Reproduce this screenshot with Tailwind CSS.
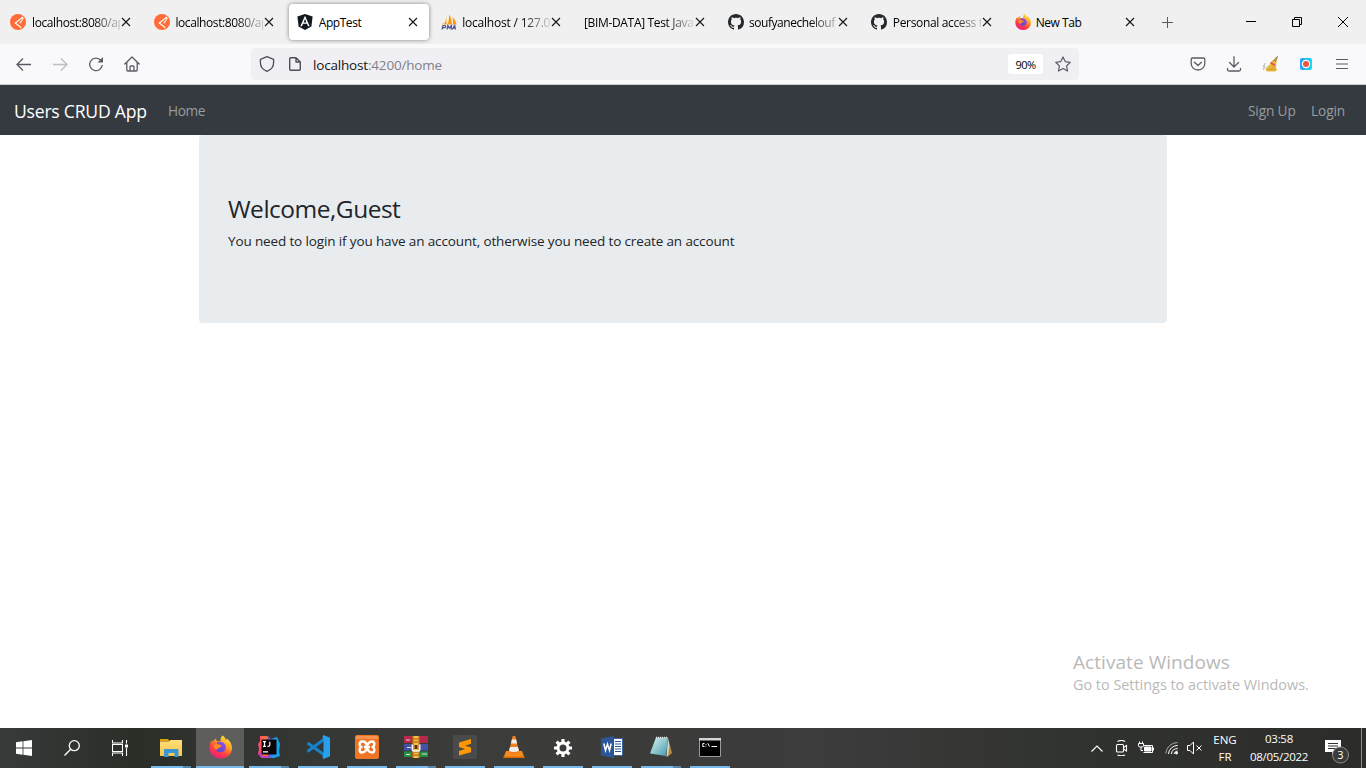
<!DOCTYPE html>
<html lang="en">
<head>
<meta charset="utf-8">
<title>AppTest</title>
<script src="https://cdn.jsdelivr.net/npm/@tailwindcss/browser@4"></script>
</head>
<body class="w-[1366px] h-[768px] overflow-hidden bg-white flex flex-col font-['Open_Sans','Noto_Sans',sans-serif]">
<svg class="absolute w-0 h-0">
  <defs>
    <linearGradient id="ffo" x1=".8" y1="0" x2=".2" y2="1"><stop offset="0" stop-color="#fff04a"/><stop offset=".35" stop-color="#ffa31f"/><stop offset=".65" stop-color="#ff4040"/><stop offset="1" stop-color="#e8178a"/></linearGradient>
    <linearGradient id="ffp" x1="1" y1="0" x2="0" y2="1"><stop offset="0" stop-color="#a04ef0"/><stop offset="1" stop-color="#4a48c8"/></linearGradient>
    <linearGradient id="dark" x1="0" y1="0" x2="1" y2="0"><stop offset="0" stop-color="#ff3d7f"/><stop offset=".35" stop-color="#f97a2b"/><stop offset=".5" stop-color="#7a50c8"/><stop offset=".7" stop-color="#14a4ee"/></linearGradient>
    <linearGradient id="note" x1="0" y1="0" x2="1" y2="1"><stop offset="0" stop-color="#dff3f5"/><stop offset="1" stop-color="#3f9aa8"/></linearGradient>
    <linearGradient id="fold" x1="0" y1="0" x2="0" y2="1"><stop offset="0" stop-color="#ffdf79"/><stop offset="1" stop-color="#f7c648"/></linearGradient>
    <linearGradient id="rec" x1="0" y1="0" x2="1" y2="0"><stop offset="0" stop-color="#2a9df4"/><stop offset="1" stop-color="#12dcf5"/></linearGradient>
    <symbol id="x" viewBox="0 0 10 10"><path d="M1 1l8 8M9 1l-8 8" stroke="#15141a" stroke-width="1.1" fill="none"/></symbol>
    <symbol id="postman" viewBox="0 0 16 16"><circle cx="8" cy="8" r="8" fill="#ff6c37"/><path d="M13 3L5.300 9l6 4.800M9.700 9.300l2.600-3.300" stroke="#fff" stroke-width="1.100" fill="none"/><circle cx="12.600" cy="4.600" r="1" fill="#fff"/></symbol>
    <symbol id="gh" viewBox="0 0 16 16"><path fill="#24292f" fill-rule="evenodd" d="M8 0C3.58 0 0 3.58 0 8c0 3.54 2.29 6.53 5.47 7.59.4.07.55-.17.55-.38 0-.19-.01-.82-.01-1.49-2.01.37-2.53-.49-2.69-.94-.09-.23-.48-.94-.82-1.13-.28-.15-.68-.52-.01-.53.63-.01 1.08.58 1.23.82.72 1.21 1.87.87 2.33.66.07-.52.28-.87.51-1.07-1.78-.2-3.64-.89-3.64-3.95 0-.87.31-1.59.82-2.15-.08-.2-.36-1.02.08-2.12 0 0 .67-.21 2.2.82.64-.18 1.32-.27 2-.27s1.36.09 2 .27c1.53-1.04 2.2-.82 2.2-.82.44 1.1.16 1.92.08 2.12.51.56.82 1.27.82 2.15 0 3.07-1.87 3.75-3.65 3.95.29.25.54.73.54 1.48 0 1.07-.01 1.93-.01 2.2 0 .21.15.46.55.38A8.01 8.01 0 0 0 16 8c0-4.42-3.58-8-8-8z"/></symbol>
    <symbol id="ff" viewBox="0 0 24 24"><path fill="url(#ffo)" d="M14.2 0c2 1.300 3 3 3.300 4.800.8-.2.9-1 .8-1.900 2.800 2.300 5.700 5.700 5.700 10.100C24 19.200 18.800 24 12.200 24 5.200 24 .5 19 .5 12.800c0-3.300 1.200-6 2.700-8 .1.900.3 1.500.7 2 .7-1.700 2-3 3.500-3.800-.1 1.200.2 2.200.9 2.900 1.300-.1 2.600 0 3.600.6C11.900 4.200 12.300 1.600 14.200 0z"/><path fill="url(#ffp)" d="M8 7.200c1.700-1 4.600-1.200 6.800.2 2.300 1.400 3.200 3.800 2.700 6-.6 2.800-2.900 4.300-5.500 4.200-2.900-.1-5.100-2-5.500-4.500 1.400.9 3 .8 4.200-.3.700-.6 1.400-.9 2.300-1-.8-1.400-2.500-1.900-4-1.600z"/><path fill="#ff8a1f" d="M4.500 10.500c1.200-1.200 3.200-1.800 5.200-1.300 1.600.1 3.200 1 3.400 1.900-.2.700-1.700.7-2.500 1.500-.7.700-1 1.600-2.200 1.900-1.500.3-3.300-.7-3.900-4z"/></symbol>
  </defs>
</svg>

<!-- Tab strip -->
<div class="h-11 shrink-0 bg-[#f0f0f0] flex text-[12px] leading-4 text-black whitespace-nowrap">
  <div class="w-[143.400px] flex items-center pl-[10px]"><svg class="w-4 h-4 shrink-0"><use href="#postman"/></svg><div class="ml-1.5 pt-0.5 w-[88px] overflow-hidden shrink-0 [mask-image:linear-gradient(to_right,black_60px,transparent_94px)]"><span class="tracking-[-0.4px]">localhost:8080/ap</span></div><svg class="w-2.5 h-2.5 shrink-0 ml-px"><use href="#x"/></svg></div>
  <div class="w-[143.400px] flex items-center pl-[10.600px]"><svg class="w-4 h-4 shrink-0"><use href="#postman"/></svg><div class="ml-[5.400px] pt-0.5 w-[88px] overflow-hidden shrink-0 [mask-image:linear-gradient(to_right,black_60px,transparent_94px)]"><span class="tracking-[-0.4px]">localhost:8080/ap</span></div><svg class="w-2.5 h-2.5 shrink-0 ml-px"><use href="#x"/></svg></div>
  <div class="w-[143.400px] pl-[2px] pr-[1px] py-1 flex"><div class="flex-1 bg-white rounded shadow-[0_0_4px_rgba(0,0,0,0.45)] flex items-center pl-2"><svg class="w-4 h-4 shrink-0" viewBox="0 0 16 16"><path fill="#111820" d="M8 0l7.600 2.600-1.200 10L8 16l-6.400-3.400L.4 2.600z"/><path fill="#fff" fill-rule="evenodd" d="M8 1.800L3.300 12.200H5l1-2.400h4l1 2.400h1.700zM8 5l1.400 3.400H6.600z"/></svg><div class="ml-1.5 pt-0.5 w-[88px] overflow-hidden shrink-0"><span class="tracking-[-0.45px]">AppTest</span></div><svg class="w-2.5 h-2.5 shrink-0 ml-px"><use href="#x"/></svg></div></div>
  <div class="w-[143.400px] flex items-center pl-[11px]"><svg class="w-4 h-4 shrink-0" viewBox="0 0 16 16"><path fill="#f89c0e" d="M5.500 2v8.500H2.800C4.600 8 5.300 5 5.500 2zM8 .5c2.300 3 3 6 2.800 10H6.300C7.800 7.500 8.200 4 8 .5zM11.500 3c2 2 3.700 4.500 4 7.500h-3.700c.3-3 .2-5-.3-7.500zM2.800 6C2.800 8 2 9.500.8 10.500h1.500z"/><path d="M1 15.500l1-4h1.700c1.500 0 1.200 2.200-.5 2.200H1.500M6 15.500l.9-4 1.300 2.500 2.300-2.500-.6 4M11 15.500l2.700-4 .8 4M12 14.200h2.500" fill="none" stroke="#4c4f8c" stroke-width="1.200"/></svg><div class="ml-[5px] pt-0.5 w-[88px] overflow-hidden shrink-0 [mask-image:linear-gradient(to_right,black_60px,transparent_92px)]"><span class="tracking-[-0.2px]">localhost / 127.0.</span></div><svg class="w-2.5 h-2.5 shrink-0 ml-px"><use href="#x"/></svg></div>
  <div class="w-[143.400px] flex items-center pl-[10.400px]"><div class="w-[110px] pt-0.5 overflow-hidden shrink-0 [mask-image:linear-gradient(to_right,black_82px,transparent_113px)]"><span class="tracking-[-0.33px]">[BIM-DATA] Test Java</span></div><svg class="w-2.5 h-2.5 shrink-0 ml-px"><use href="#x"/></svg></div>
  <div class="w-[143.400px] flex items-center pl-[11px]"><svg class="w-4 h-4 shrink-0"><use href="#gh"/></svg><div class="ml-[5px] pt-0.5 w-[88px] overflow-hidden shrink-0 [mask-image:linear-gradient(to_right,black_60px,transparent_96px)]"><span class="tracking-[-0.45px]">soufyanechelouf</span></div><svg class="w-2.5 h-2.5 shrink-0 ml-px"><use href="#x"/></svg></div>
  <div class="w-[143.400px] flex items-center pl-[11px]"><svg class="w-4 h-4 shrink-0"><use href="#gh"/></svg><div class="ml-[5.500px] pt-0.5 w-[88px] overflow-hidden shrink-0 [mask-image:linear-gradient(to_right,black_60px,transparent_94px)]"><span class="tracking-[-0.35px]">Personal access t</span></div><svg class="w-2.5 h-2.5 shrink-0 ml-px"><use href="#x"/></svg></div>
  <div class="w-[143.400px] flex items-center pl-[11px]"><svg class="w-4 h-4 shrink-0"><use href="#ff"/></svg><div class="ml-[5px] pt-0.5 w-[88px] overflow-hidden shrink-0"><span class="tracking-[-0.45px]">New Tab</span></div><svg class="w-2.5 h-2.5 shrink-0 ml-px"><use href="#x"/></svg></div>
  <div class="flex-1 flex items-center justify-between pl-[14.800px] pr-[18px]">
    <svg class="w-[11px] h-[11px]" viewBox="0 0 11 11"><path d="M5.500 0v11M0 5.500h11" stroke="#5b5b66"/></svg>
    <div class="flex items-center gap-9">
      <svg class="w-[10px] h-[10px]" viewBox="0 0 10 10"><path d="M0 4.500h10" stroke="#000"/></svg>
      <svg class="w-[10px] h-[10px]" viewBox="0 0 10 10"><path d="M.5 2.500h7v7h-7zM2.500 2.500v-2h7v7h-2" stroke="#000" fill="none"/></svg>
      <svg class="w-[10px] h-[10px]" viewBox="0 0 10 10"><path d="M0 0l10 10M10 0L0 10" stroke="#000"/></svg>
    </div>
  </div>
</div>

<!-- Address toolbar -->
<div class="h-[41px] shrink-0 bg-[#f9f9fb] border-b border-[#cccccc] flex items-center pl-4 pr-4">
  <div class="flex items-center gap-5 w-[235px]">
    <svg class="w-4 h-4" viewBox="0 0 16 16" fill="none" stroke="#5b5b66" stroke-width="1.300"><path d="M15 8.500H1.500M7 2.500l-6 6 6 6"/></svg>
    <svg class="w-4 h-4" viewBox="0 0 16 16" fill="none" stroke="#bdbdc3" stroke-width="1.300"><path d="M1 8.500h13.500M9 2.500l6 6-6 6"/></svg>
    <svg class="w-4 h-4" viewBox="0 0 16 16" fill="none" stroke="#5b5b66" stroke-width="1.300"><path d="M14.300 9A6.300 6.300 0 1 1 13 4.500"/><path d="M15 1v5.500H9.500z" fill="#5b5b66" stroke="none"/></svg>
    <svg class="w-4 h-4" viewBox="0 0 16 16" fill="none" stroke="#5b5b66" stroke-width="1.300" stroke-linejoin="round" stroke-linecap="round"><path d="M.8 8L8 1l7.200 7M2.800 6.500V14q0 1 1 1h8.400q1 0 1-1V6.500M6 15v-4q0-1 1-1h2q1 0 1 1v4"/></svg>
  </div>
  <div class="w-[828px] h-8 bg-[#f0f0f4] rounded flex items-center pl-2 pr-2">
    <svg class="w-4 h-4" viewBox="0 0 16 16" fill="none" stroke="#4d4d57" stroke-width="1.300" stroke-linejoin="round"><path d="M8 .7l6.600 2.600v3.200c0 4-2.500 7.300-6.600 8.800C3.900 13.800 1.400 10.500 1.400 6.500V3.300z"/></svg>
    <svg class="w-4 h-4 ml-3" viewBox="0 0 16 16" fill="none" stroke="#4d4d57" stroke-width="1.400" stroke-linejoin="round"><path d="M9 1.700H3.700q-1 0-1 1v10.600q0 1 1 1h8.600q1 0 1-1V6zM9 1.700V6h4.300"/></svg>
    <div class="ml-[10px] pt-0.5 flex-1 text-[13.500px] leading-5 text-[#15141a] whitespace-nowrap"><span class="tracking-[-0.18px]">localhost<span class="text-[#80808a]">:4200/home</span></span></div>
    <div class="w-[35px] h-5 bg-white rounded-[3px] text-[11px] leading-[22px] text-center text-black tracking-[-0.5px] mr-3">90%</div>
    <svg class="w-4 h-4" viewBox="0 0 16 16" fill="none" stroke="#5b5b66" stroke-width="1.200" stroke-linejoin="round"><path d="M8 .9l2.200 4.700 5.100.7-3.700 3.600.9 5.200L8 12.600l-4.500 2.500.9-5.200L.7 6.300l5.100-.7z"/></svg>
  </div>
  <div class="flex-1 flex items-center justify-end gap-5">
    <svg class="w-4 h-4" viewBox="0 0 16 16" fill="none" stroke="#5b5b66" stroke-width="1.300" stroke-linejoin="round" stroke-linecap="round"><path d="M2.500 2h11q1.300 0 1.300 1.300V7.500a6.800 6.500 0 0 1-13.600 0V3.300Q1.200 2 2.500 2zM4.500 6.200L8 9.500l3.500-3.300"/></svg>
    <svg class="w-4 h-4" viewBox="0 0 16 16" fill="none" stroke="#5b5b66" stroke-width="1.300" stroke-linejoin="round" stroke-linecap="round"><path d="M8 .7v10M3.500 6.500L8 11l4.500-4.500M1.500 12.500v1q0 1.500 1.500 1.500h10q1.500 0 1.500-1.500v-1"/></svg>
    <svg class="w-4 h-4" viewBox="0 0 16 16"><path d="M15.500.3L11 5l2.500 1.500z" stroke="#a8742c" stroke-width=".8" fill="#c9973e"/><path fill="#e8b93c" d="M10.500 4l4 2.500c-.6 3-.6 5 .4 8l-2 1H5C3.500 14.500 3 13 4.500 11.500 7 9.500 9 7.500 10.500 4z"/><path d="M8.500 6.500l4.500 3" stroke="#e0564a" stroke-width="1.800"/><path d="M5.500 13.500h8M9.500 11l3.500 1" stroke="#c99628" stroke-width=".8"/><path d="M3.500 7L1 11M3.200 10L1 14" stroke="#b8c4c0" stroke-width="1.200"/></svg>
    <svg class="w-4 h-4" viewBox="0 0 16 16"><rect x="2" y="2" width="12" height="12" rx="2" fill="url(#rec)"/><circle cx="8" cy="8" r="4.200" fill="#fff"/><circle cx="8" cy="8" r="3" fill="#f0503c"/></svg>
    <svg class="w-4 h-4" viewBox="0 0 16 16" stroke="#5b5b66" stroke-width="1.200"><path d="M2 3.500h12M2 8h12M2 12.500h12"/></svg>
  </div>
</div>

<!-- Web page -->
<main class="flex-1 flex flex-col bg-white">
  <nav class="h-[50px] bg-[#343a40] flex items-center pt-0.5 pl-[14px] pr-[21px] text-[13.700px] text-[#999c9f] whitespace-nowrap">
    <a class="text-[17.600px] text-white w-[154px] tracking-[-0.23px]">Users CRUD App</a>
    <a class="flex-1 tracking-[-0.4px]">Home</a>
    <a class="w-[63px] tracking-[-0.150px]">Sign Up</a>
    <a class="w-[34px] tracking-[-0.1px]">Login</a>
  </nav>
  <section class="w-[968px] h-[188px] mx-auto bg-[#e9ecef] rounded-[4px] pl-[29px] pt-[57px] text-[#212529] whitespace-nowrap">
    <h3 class="text-[24.500px] leading-[34px] tracking-[-0.5px]">Welcome,Guest</h3>
    <p class="text-[13.500px] leading-[22px] mt-[4px] tracking-[-0.135px]">You need to login if you have an account, otherwise you need to create an account</p>
  </section>
  <div class="flex-1 flex flex-col justify-end items-start pl-[1073px] pb-[32px] text-[#b9b9b9] whitespace-nowrap">
    <div class="text-[19px] leading-6 tracking-[0.06px]">Activate Windows</div>
    <div class="text-[14.400px] leading-[22px]">Go to Settings to activate Windows.</div>
  </div>
</main>

<!-- Taskbar -->
<footer class="h-10 shrink-0 bg-[linear-gradient(90deg,#373a39_0%,#2a2e27_10%,#30332f_15%,#3c3d3a_35%,#3b3c3b_60%,#30322f_80%,#2c2d2b_100%)] flex text-white">
  <div class="w-12 flex items-center justify-center"><svg class="w-4 h-4" viewBox="0 0 16 16" fill="#fff"><path d="M0 2.300L6.600 1.300v6.300H0zM7.400 1.200L16 0v7.600H7.400zM0 8.400h6.600v6.300L0 13.700zM7.400 8.400H16V16l-8.600-1.200z"/></svg></div>
  <div class="w-12 flex items-center justify-center"><svg class="w-4 h-4" viewBox="0 0 16 16" fill="none" stroke="#fff" stroke-width="1.300"><circle cx="10.300" cy="5.700" r="5"/><path d="M6.700 9.300L.5 15.500"/></svg></div>
  <div class="w-12 flex items-center justify-center"><svg class="w-4 h-4" viewBox="0 0 16 16" fill="none" stroke="#fff" stroke-width="1.100"><path d="M.5 0v3h10V0M.5 4.500h10v7H.5zM.5 16v-3h10v3M14.500 0v3.500M14.500 8v8"/><path fill="#fff" stroke="none" d="M13 4.500h3v3h-3z"/></svg></div>
  <div class="ml-[7px] mr-[5px] w-10 flex flex-col"><div class="flex-1 flex items-center justify-center"><svg class="w-[22px] h-5 mt-0.5" viewBox="0 0 22 20"><path fill="#e0a20c" d="M0 1h8l2 2.500H0z"/><path fill="url(#fold)" d="M0 3.500h9l1.500-1.500H22v16H0z"/><path fill="#3d95d6" d="M4 19v-7q0-1 1-1h12.500q1 0 1 1v7h-4v-4H8.500v4z"/></svg></div><div class="flex h-0.5"><div class="w-8 bg-[#76b9ed]"></div><div class="w-2 bg-[#5788ac]"></div></div></div>
  <div class="w-12 bg-[#5d5e5c] flex flex-col"><div class="flex-1 flex items-center justify-center"><svg class="w-[23px] h-[24px]"><use href="#ff"/></svg></div><div class="h-0.5 bg-[#76b9ed]"></div></div>
  <div class="w-[49px] pl-[5px] flex flex-col"><div class="w-10 flex-1 flex items-center justify-center"><svg class="w-6 h-6" viewBox="0 0 24 24"><path fill="url(#dark)" d="M3 1l8 0 3 3 6-2 3 7-1 8 1 4-6 2-5 0-7 0-4-4 1-5-1-5 2-3z"/><path d="M2 17l3 5 5 0" stroke="#c23cc8" stroke-width="2" fill="none"/><path fill="#0c0508" d="M4.500 4.500h15v15h-15z"/><path d="M6 6.700h3M7.500 6.700v4.600M6 11.300h3M12.800 6.700v3.400q0 1.200-1.200 1.200h-1.100M6 16.800h5" stroke="#fff" stroke-width="1.200" fill="none"/></svg></div><div class="flex h-0.5 w-10"><div class="w-8 bg-[#76b9ed]"></div><div class="w-2 bg-[#5788ac]"></div></div></div>
  <div class="w-[49px] pl-[5px] flex flex-col"><div class="w-10 flex-1 flex items-center justify-center"><svg class="w-6 h-6" viewBox="0 0 24 24"><path d="M1.500 8l17 12M1.500 16.500L18.500 4" stroke="#1583cc" stroke-width="3"/><path fill="#27a0ee" d="M17.500 0L24 2.800v18.400L17.500 24l-1-1.500 1-4.500V6l-1-4.500z"/></svg></div><div class="h-0.5 w-10 bg-[#76b9ed]"></div></div>
  <div class="w-[49px] pl-[5px] flex flex-col"><div class="w-10 flex-1 flex items-center justify-center"><svg class="w-6 h-6" viewBox="0 0 24 24"><rect width="24" height="24" rx="2" fill="#ef7424"/><path fill="#f79350" d="M1 1h22v3H1z"/><path d="M9.500 6.500H7C4 6.500 4 11 6.500 12 4 13 4 17.500 7 17.500c3 0 4-2 5-4 1 2 2 4 5 4s3-4.500.5-5.500C20 11 20 6.500 17 6.500c-3 0-4 2-5 4-.7-1.700-1.300-4-3.500-4M9 12h6" stroke="#fff" stroke-width="2.400" fill="none" stroke-linejoin="round"/></svg></div><div class="h-0.5 w-10 bg-[#76b9ed]"></div></div>
  <div class="w-[49px] pl-[5px] flex flex-col"><div class="w-10 flex-1 flex items-center justify-center"><svg class="w-6 h-6" viewBox="0 0 24 24"><path fill="#b52a4a" d="M0 1h24v7H0z"/><path fill="#4553a4" d="M0 9h24v6.500H0z"/><path fill="#249044" d="M0 16.500h24V22H0z"/><path d="M2 5h4M3 12.500h4M2 19.500h4M18 19h5" stroke="#e8dcc8" stroke-width="1"/><path fill="#b26118" d="M8 1h8v22H8z"/><path fill="#f5c044" d="M9.500 1h5v22h-5z"/><path d="M9.500 4h5M9.500 7h5M9.500 17h5M9.500 20h5" stroke="#a65b14"/><path d="M8.300 9.500v5q0 1.500 1.500 1.500h4.400q1.500 0 1.500-1.500v-5" stroke="#f3f3f3" stroke-width="1.600" fill="none"/><path fill="#5b2b12" d="M10.500 10h3v4h-3z"/></svg></div><div class="flex h-0.5 w-10"><div class="w-8 bg-[#76b9ed]"></div><div class="w-2 bg-[#5788ac]"></div></div></div>
  <div class="w-[49px] pl-[5px] flex flex-col"><div class="w-10 flex-1 flex items-center justify-center"><svg class="w-6 h-6" viewBox="0 0 24 24"><rect width="24" height="24" rx="1.500" fill="#4a4a4a"/><path fill="#ff9800" d="M18 4v4.800l-6 1.900 6 1.900v4.600L6 20.500v-4.600l6-1.900-6-1.900V7.600z"/></svg></div><div class="h-0.5 w-10 bg-[#76b9ed]"></div></div>
  <div class="w-[49px] pl-[5px] flex flex-col"><div class="w-10 flex-1 flex items-center justify-center"><svg class="w-[22px] h-6" viewBox="0 0 22 24"><path fill="#f98b1a" d="M3 16h16l2.500 7H.5z"/><path fill="#d96a08" d="M.5 21.500h21V23H.5z"/><path fill="#f08020" d="M9.700 1h2.600L16.500 18q-5.500 3-11 0z"/><path fill="#eee" d="M8.900 4.500h4.200l1 4H7.900zM7 12h8l1 4q-5 2-10 0z"/></svg></div><div class="h-0.5 w-10 bg-[#76b9ed]"></div></div>
  <div class="w-[49px] pl-[5px] flex flex-col"><div class="w-10 flex-1 flex items-center justify-center"><svg class="w-[18px] h-[18px] mt-px" viewBox="0 0 18 18"><circle cx="9" cy="9" r="5" fill="none" stroke="#fff" stroke-width="3"/><g stroke="#fff" stroke-width="3.200"><path d="M9 0v3.500M9 14.500V18M0 9h3.500M14.500 9H18M2.600 2.600l2.500 2.500M12.900 12.900l2.500 2.500M2.600 15.400l2.500-2.500M12.900 5.100l2.500-2.500"/></g></svg></div><div class="h-0.5 w-10 bg-[#76b9ed]"></div></div>
  <div class="w-[49px] pl-[5px] flex flex-col"><div class="w-10 flex-1 flex items-center justify-center"><svg class="w-[22px] h-[22px]" viewBox="0 0 22 22"><path fill="#fff" stroke="#2b579a" stroke-width=".8" d="M12 2.500h9.500v17H12z"/><path d="M14 5.500h6M14 8h6M14 10.500h6M14 13h6M14 15.500h6" stroke="#2b579a"/><path fill="#2b579a" d="M0 2.500L13 0v22L0 19.500z"/><path d="M2.800 7.500l1.700 7 2-6.500 2 6.500 1.700-7" stroke="#fff" stroke-width="1.500" fill="none"/></svg></div><div class="h-0.5 w-10 bg-[#76b9ed]"></div></div>
  <div class="w-[49px] pl-[5px] flex flex-col"><div class="w-10 flex-1 flex items-center justify-center"><svg class="w-6 h-6" viewBox="0 0 24 24"><path fill="#d9d9d2" d="M19 3l3.500 15-5 4z"/><path fill="#b58a3c" d="M20.500 9l2.500 9-4 3.500z"/><path fill="url(#note)" d="M7 2.500h12L17 21 1 18.500z"/><path d="M7 2.500h12" stroke="#e8e8e8" stroke-width="1.500" stroke-dasharray="1 1"/></svg></div><div class="flex h-0.5 w-10"><div class="w-8 bg-[#76b9ed]"></div><div class="w-2 bg-[#5788ac]"></div></div></div>
  <div class="w-[49px] pl-[5px] flex flex-col"><div class="w-10 flex-1 flex items-center justify-center"><svg class="w-[22px] h-[19px]" viewBox="0 0 22 19"><path fill="#000" stroke="#9a9a9a" d="M.5.5h21v18H.5z"/><path fill="#d4d4d4" d="M0 0h22v2.500H0z"/><path d="M5.500 5.500H3.800v3h1.700M7 6v.8M7 7.800v.8M8.800 5.200l1.700 3.400M12.500 8.500H18" stroke="#fff" fill="none"/></svg></div><div class="h-0.5 w-10 bg-[#76b9ed]"></div></div>
  <div class="flex-1 flex items-center justify-end">
    <svg class="w-3 h-[7px] mr-[11px]" viewBox="0 0 12 7" fill="none" stroke="#fff" stroke-width="1.200"><path d="M.5 6.500L6 1l5.500 5.500"/></svg>
    <svg class="w-4 h-4 mr-2" viewBox="0 0 16 16" fill="none" stroke="#fff" stroke-width="1.100"><rect x="2.500" y="4.500" width="7" height="7.500" rx="1"/><path d="M9.500 7.500l3-2v5.500l-3-2M3.500 1.500Q7.500-.5 11 1.500M3.500 15q4 1.500 7.500 0"/></svg>
    <svg class="w-4 h-[14px] mr-[11px]" viewBox="0 0 16 14" fill="none" stroke="#fff"><path d="M5.500 4.500h9v7h-9M15.500 6.500v3M1.500.5v2M4.500.5v2M.5 2.500h5v2q0 1.500-1.500 1.500H2Q.5 6 .5 4.500zM3 6v3.500h2"/><path fill="#fff" d="M6.500 6h6.500v4H6.500z"/></svg>
    <svg class="w-[14px] h-[14px] mr-2" viewBox="0 0 14 14" fill="none" stroke="#fff"><path d="M.7 12.500A12 12 0 0 1 12.500 1.500" stroke="#aaa"/><path d="M3.500 13A9 9 0 0 1 12.700 4.500M6.300 13A6.500 6.500 0 0 1 12.700 7.500M9 13A4 4 0 0 1 12.700 10"/><circle cx="11.500" cy="12" r="1" fill="#fff"/></svg>
    <svg class="w-4 h-[14px] mr-[8px]" viewBox="0 0 16 14" fill="none" stroke="#fff"><path d="M.5 4.500H3L6.500 1v12L3 9.500H.5zM9.500 4.500l5 5M14.500 4.500l-5 5"/></svg>
    <div class="w-[28px] text-[11.500px] leading-[17px] text-center whitespace-nowrap">ENG<br>FR</div>
    <div class="w-[60px] ml-[10px] mr-[16px] text-[11.500px] leading-[18px] -mt-px flex flex-col items-center whitespace-nowrap tracking-[-0.3px]"><span>03:58</span><span>08/05/2022</span></div>
    <svg class="w-[25px] h-6 mr-[11px] mt-2" viewBox="0 0 25 24"><path fill="#fff" d="M0 0h16v12h-6l-3 3v-3H0z"/><path d="M3 3.500h10M3 6h10M3 8.500h10" stroke="#333"/><circle cx="15.500" cy="15" r="8" fill="#3a3b3a" stroke="#8d8d8d"/><text x="15.500" y="19" font-size="11" fill="#fff" text-anchor="middle">3</text></svg>
    <div class="w-px h-10 bg-[#8a8b8a] mr-1"></div>
  </div>
</footer>
</body>
</html>
